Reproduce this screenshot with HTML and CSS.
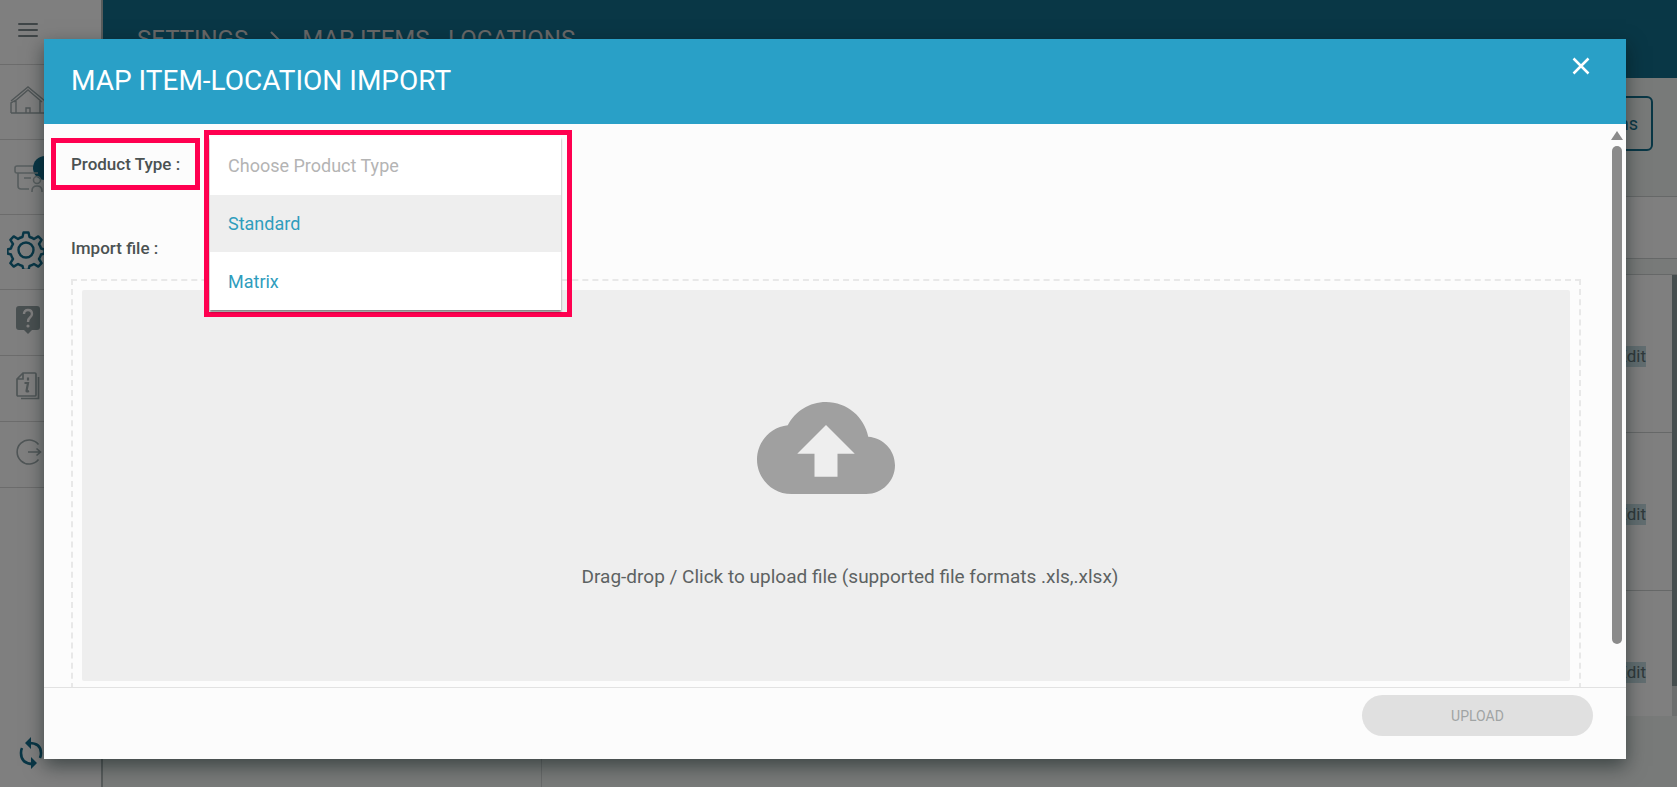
FILE: index.html
```html
<!DOCTYPE html>
<html lang="en">
<head>
<meta charset="utf-8">
<title>Map Items - Locations</title>
<link rel="stylesheet" href="styles.css">
</head>
<body>
<div class="app">
  <nav class="sidebar" aria-label="Main">
    <button class="side-item menu" aria-label="Menu">
      <svg width="20" height="14" viewBox="0 0 20 14" fill="none" stroke="currentColor" stroke-width="2" stroke-linecap="round"><path d="M1 1h18M1 7h18M1 13h18"/></svg>
    </button>
    <a class="side-item tall home" href="#" aria-label="Home">
      <svg width="36" height="30" viewBox="0 0 36 30" fill="none" stroke="currentColor" stroke-width="1.4"><path d="M1 16 18 2l17 14M4 17 18 5l14 12M6 16v12M1 28V18l5-3M30 16v12M35 28V18M1 28h34M16 28v-5h4v5"/></svg>
    </a>
    <a class="side-item tall box" href="#" aria-label="Orders">
      <svg width="44" height="40" viewBox="0 0 44 40" fill="none" stroke="currentColor" stroke-width="1.6"><circle class="dot" cx="31" cy="13" r="12"/><path d="M19 11H3a2 2 0 0 0-2 2v3a2 2 0 0 0 2 2h21M4 18v13a3 3 0 0 0 3 3h8M10 23h7"/><circle cx="23" cy="25" r="3.500"/><path d="M18 37v-1q0-5 5-5t5 5v1"/></svg>
    </a>
    <a class="side-item tall gear" href="#" aria-label="Settings">
      <svg width="38" height="38" viewBox="0 0 38 38" fill="none" stroke="currentColor" stroke-width="2.400" stroke-linejoin="round"><circle cx="19" cy="19" r="7.500"/><path d="M16.500 1.500h5l1 4.500q2.500.6 4.500 2l4.300-2.600 3.300 3.400-2.600 4.200q1.400 2 2 4.500l3.500 1v4l-3.500 1q-.6 2.500-2 4.500l2.600 4.200-3.300 3.400-4.300-2.600q-2 1.400-4.500 2l-1 4h-5l-1-4q-2.500-.6-4.500-2l-4.300 2.600-3.300-3.400 2.600-4.200q-1.400-2-2-4.500l-3.500-1v-4l3.500-1q.6-2.500 2-4.500L3.400 8.800l3.300-3.400L11 8q2-1.400 4.500-2z"/></svg>
    </a>
    <a class="side-item help" href="#" aria-label="Help">
      <svg width="24" height="28" viewBox="0 0 24 28"><path fill="currentColor" d="M3 0h18a3 3 0 0 1 3 3v18a3 3 0 0 1-3 3h-5l-4 4-4-4H3a3 3 0 0 1-3-3V3a3 3 0 0 1 3-3z"/><path d="M8 8q0-4 4-4t4 4q0 2-2 3.500T12 16" fill="none" stroke="#fff" stroke-width="2.400"/><circle cx="12" cy="20" r="1.600" fill="#fff"/></svg>
    </a>
    <a class="side-item info" href="#" aria-label="Information">
      <svg width="24" height="28" viewBox="0 0 24 28" fill="none" stroke="currentColor" stroke-width="1.700"><path d="M7 1h12q1 0 1 1v21q0 1-1 1H2q-1 0-1-1V7zM7 1v6H1M22.500 5v21.500H5"/><path d="M8.500 11H12l-1.500 8q0 1 2.500 0M12 5.500v3" stroke-width="2.200"/></svg>
    </a>
    <a class="side-item logout" href="#" aria-label="Log out">
      <svg width="26" height="26" viewBox="0 0 26 26" fill="none" stroke="currentColor" stroke-width="1.600"><path d="M22.500 5.500a12 12 0 1 0 0 15M12 13h12M20.500 9.500 24.500 13l-4 3.500"/></svg>
    </a>
    <button class="sync" aria-label="Sync">
      <svg width="24" height="32" viewBox="0 0 24 32" fill="none" stroke="currentColor" stroke-width="2.600"><path d="M10 6q12 0 12 10 0 3-1 5M14 27Q2 27 2 16q0-3 1-5"/><path fill="currentColor" stroke="none" d="M12 0v12L6 6zM12 20v12l6-6z"/></svg>
    </button>
  </nav>
  <div class="page">
    <header class="crumbs"><span>SETTINGS</span>
      <svg width="10" height="16" viewBox="0 0 10 16" fill="none" stroke="currentColor" stroke-width="2"><path d="m1 1 7 7-7 7"/></svg>
      <span>MAP ITEMS - LOCATIONS</span></header>
    <div class="toolbar"><button class="outline">Import Item Locations</button></div>
    <div class="filter"></div>
    <div class="list">
      <div class="rows">
        <div class="row"><a href="#">Edit</a></div>
        <div class="row"><a href="#">Edit</a></div>
        <div class="row"><a href="#">Edit</a></div>
      </div>
      <div class="track"><div class="bar"></div></div>
    </div>
    <div class="below"></div>
  </div>
</div>

<div class="overlay">
  <section class="dialog" role="dialog" aria-labelledby="title">
    <header class="dialog-head">
      <h1 id="title">MAP ITEM-LOCATION IMPORT</h1>
      <button class="close" aria-label="Close">
        <svg width="18" height="18" viewBox="0 0 18 18" fill="none" stroke="currentColor" stroke-width="2.500"><path d="m1.500 1.500 15 15M16.500 1.500l-15 15"/></svg>
      </button>
    </header>
    <div class="dialog-body">
      <div class="content">
        <div class="field">
          <span class="label marked" id="type-label">Product Type :</span>
          <div class="picker">
            <div class="menu-panel" role="listbox" aria-labelledby="type-label">
              <button class="option hint" role="option" disabled>Choose Product Type</button>
              <button class="option active" role="option">Standard</button>
              <button class="option" role="option">Matrix</button>
            </div>
          </div>
        </div>
        <label class="label file-label" for="file">Import file :</label>
        <div class="drop-frame">
          <label class="drop">
            <input class="file" id="file" type="file" accept=".xls,.xlsx">
            <svg width="138" height="138" viewBox="0 0 24 24" fill="#a0a0a0"><path d="M19.350 10.040C18.670 6.590 15.640 4 12 4 9.110 4 6.600 5.640 5.350 8.040 2.340 8.360 0 10.910 0 14c0 3.310 2.690 6 6 6h13c2.760 0 5-2.240 5-5 0-2.640-2.050-4.780-4.650-4.960zM14 13v4h-4v-4H7l5-5 5 5h-3z"/></svg>
            <span class="drop-text">Drag-drop / Click to upload file (supported file formats .xls,.xlsx)</span>
          </label>
        </div>
      </div>
      <div class="scroll">
        <svg width="12" height="9" viewBox="0 0 12 9"><path fill="#8b8b8b" d="M6 0l6 9H0z"/></svg>
        <div class="thumb"></div>
      </div>
    </div>
    <footer class="dialog-foot"><button class="upload" disabled>UPLOAD</button></footer>
  </section>
</div>
</body>
</html>
```
FILE: styles.css
```css
* { box-sizing: border-box; }
body {
  margin: 0;
  font-family: Roboto, "Liberation Sans", sans-serif;
  font-size: 18px;
  color: #4b5252;
  overflow: hidden;
}
button { font: inherit; border: 0; background: none; padding: 0; color: inherit; }
svg { display: block; flex: none; }

.app { display: flex; height: 100vh; background: #f0f4f2; }
.sidebar {
  width: 103px;
  flex: none;
  display: flex;
  flex-direction: column;
  background: #fff;
  border-right: 2px solid #b0b8b8;
}
.side-item {
  height: 66px;
  flex: none;
  display: flex;
  align-items: center;
  padding: 0 0 5px 16px;
  color: #93a0a3;
  border-bottom: 1px solid #d8d8d8;
}
.tall { height: 75px; }
.menu { height: 65px; padding-left: 18px; color: #7f8b8e; }
.home { padding-left: 10px; color: #a0acae; }
.box { padding-left: 14px; color: #b0bcbe; }
.dot { fill: #126d8c; stroke: none; }
.gear { padding-left: 7px; color: #126d8c; }
.info, .logout { color: #a0acae; }
.sync { margin: auto 0 18px 19px; color: #126d8c; align-self: flex-start; }

.page { flex: 1; min-width: 0; display: flex; flex-direction: column; }
.crumbs {
  height: 78px;
  flex: none;
  display: flex;
  align-items: center;
  gap: 22px;
  padding-left: 34px;
  background: #126e8c;
  color: #d0d0d0;
  font-size: 24px;
}
.toolbar {
  height: 118px;
  flex: none;
  display: flex;
  justify-content: flex-end;
  align-items: center;
  padding: 0 24px 27px 0;
}
.outline { height: 55px; padding: 0 13px; border: 2px solid #126e8c; border-radius: 6px; color: #126e8c; }
.filter { height: 63px; flex: none; background: #fff; border: solid #ccd0d0; border-width: 1px 0; }
.list { display: flex; height: 442px; margin-top: 15px; flex: none; border-top: 1px solid #ccd0d0; }
.rows { flex: 1; background: #fff; display: flex; flex-direction: column; overflow: hidden; }
.row {
  height: 158px;
  flex: none;
  display: flex;
  align-items: center;
  justify-content: flex-end;
  padding: 5px 26px 0 0;
  border-bottom: 1px solid #ccd0d0;
}
.row a { background: #c4dce2; color: #607478; text-decoration: none; font-size: 17px; line-height: 21px; }
.track { width: 5px; background: #d8dcdc; }
.bar { height: 411px; background: #8c9c9e; }
.below { flex: 1; width: 439px; border-right: 1px solid #d0d4d4; }

.overlay {
  position: absolute;
  inset: 0;
  display: flex;
  padding: 39px 51px 28px 44px;
  background: rgba(0, 0, 0, .5);
}
.dialog {
  flex: 1;
  min-width: 0;
  display: flex;
  flex-direction: column;
  background: #fcfcfc;
  box-shadow: 0 7px 18px rgba(0, 15, 15, .5);
}
.dialog-head {
  height: 85px;
  flex: none;
  display: flex;
  justify-content: space-between;
  padding: 18px 36px 0 27px;
  background: #29a0c7;
  color: #fff;
}
h1 { margin: 0; font-size: 28px; line-height: 48px; font-weight: 400; }
.close { align-self: flex-start; }
.dialog-body { flex: 1; min-height: 0; display: flex; }
.content { flex: 1; min-width: 0; padding: 6px 0 0 7px; display: flex; flex-direction: column; overflow: hidden; }
.field { display: flex; align-items: flex-start; gap: 4px; height: 108px; flex: none; }
.label { font-size: 17px; font-weight: 500; line-height: 20px; }
.marked { margin-top: 8px; width: 149px; height: 52px; padding: 11px 15px; border: 5px solid #ff0050; white-space: nowrap; }
.picker { width: 368px; height: 187px; padding: 2px 6px 2px 1px; border: 5px solid #ff0050; position: relative; z-index: 1; }
.menu-panel { height: 173px; display: flex; flex-direction: column; background: #fff; box-shadow: 0 2px 2px rgba(0, 0, 0, .45); }
.option { flex: 1; padding-left: 18px; text-align: left; color: #2f9dbd; }
.hint { color: #b4b4b4; }
.active { background: #eee; }
.file-label { margin-left: 20px; line-height: 20px; }
.drop-frame { height: 420px; flex: none; margin: 21px 0 0 20px; padding: 9px; border: 2px dashed #e8e8e8; }
.drop {
  height: 391px;
  display: flex;
  flex-direction: column;
  align-items: center;
  padding-top: 89px;
  background: #eee;
  border-radius: 2px;
}
.file { position: absolute; opacity: 0; width: 1px; height: 1px; }
.drop-text { margin-top: 48px; padding-left: 48px; font-size: 19px; line-height: 24px; color: #5d6262; }
.scroll { width: 45px; flex: none; display: flex; flex-direction: column; align-items: flex-end; padding: 7px 3px 43px 0; gap: 6px; }
.thumb { flex: 1; width: 10px; margin-right: 1px; border-radius: 5px; background: #8b8b8b; }
.dialog-foot { height: 72px; flex: none; display: flex; justify-content: flex-end; padding: 7px 33px 0 0; border-top: 1px solid #e2e2e2; }
.upload { width: 231px; height: 41px; border-radius: 21px; background: #e0e0e0; color: #a0a4a4; font-size: 14px; }
```
